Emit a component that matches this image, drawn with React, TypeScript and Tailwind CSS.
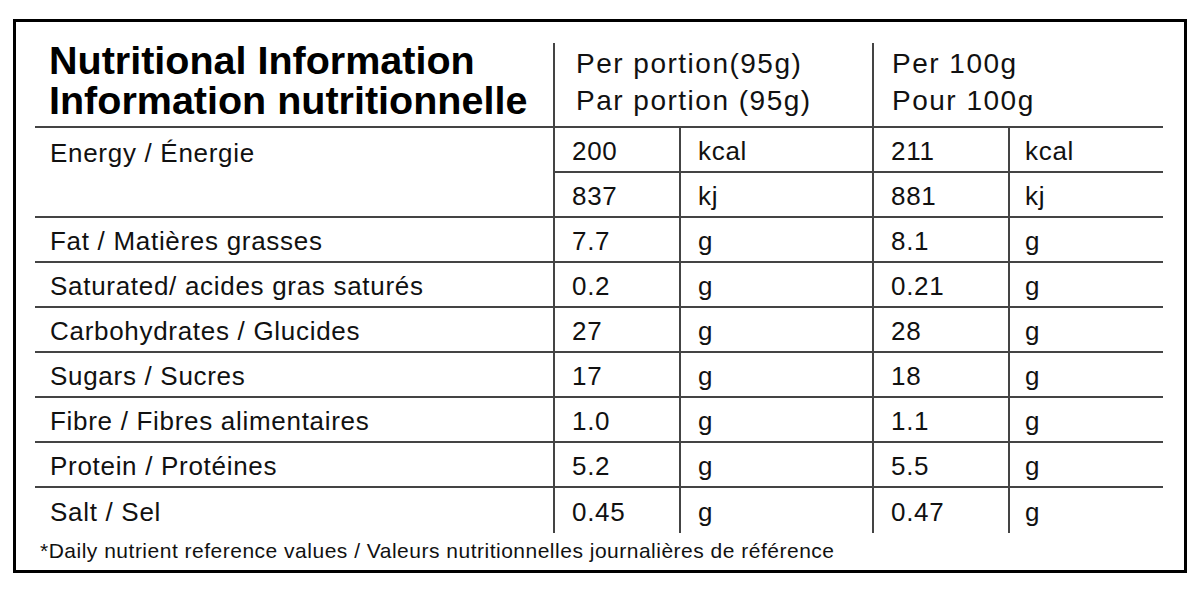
const rows = [
  { label: 'Fat / Matières grasses', a: '7.7', b: '8.1' },
  { label: 'Saturated/ acides gras saturés', a: '0.2', b: '0.21' },
  { label: 'Carbohydrates / Glucides', a: '27', b: '28' },
  { label: 'Sugars / Sucres', a: '17', b: '18' },
  { label: 'Fibre / Fibres alimentaires', a: '1.0', b: '1.1' },
  { label: 'Protein / Protéines', a: '5.2', b: '5.5' },
  { label: 'Salt / Sel', a: '0.45', b: '0.47' },
]

function ValueCells({ a, ua, b, ub }: { a: string; ua: string; b: string; ub: string }) {
  return (
    <>
      <div className="w-[126px] border-l-2 border-[#444] pl-[17px] pt-1 flex items-center">{a}</div>
      <div className="w-[193px] border-l-2 border-[#444] pl-[17px] pt-1 flex items-center">{ua}</div>
      <div className="w-[136px] border-l-2 border-[#444] pl-[17px] pt-1 flex items-center">{b}</div>
      <div className="w-[155px] border-l-2 border-[#444] pl-[15px] pt-1 flex items-center">{ub}</div>
    </>
  )
}

export default function App() {
  return (
    <div className="w-[1200px] h-[590px] bg-white pt-[19px] pl-[13px] font-['Liberation_Sans',Arial,sans-serif] text-[#111]">
      <div className="w-[1174px] h-[554px] border-[3px] border-black pt-[21px] pl-[19px]">
        <div className="w-[1128px]">
          {/* Header */}
          <div className="flex h-[85px] border-b-2 border-[#444]">
            <div className="w-[518px] pl-[14px] -mt-[3px] text-[39.5px] font-bold leading-[40px] text-black">
              <div>Nutritional Information</div>
              <div>Information nutritionnelle</div>
            </div>
            <div className="w-[319px] border-l-2 border-[#444] pl-[21px] pt-[2px] text-[28px] leading-[37px] tracking-[1.5px]">
              <div>Per portion(95g)</div>
              <div>Par portion (95g)</div>
            </div>
            <div className="w-[291px] border-l-2 border-[#444] pl-[18px] pt-[2px] text-[28px] leading-[37px] tracking-[1.5px]">
              <div>Per 100g</div>
              <div>Pour 100g</div>
            </div>
          </div>

          <div className="text-[26px] tracking-[0.7px]">
            {/* Energy */}
            <div className="flex border-b-2 border-[#444]">
              <div className="w-[518px] pl-[15px] pt-[6px]">Energy / Énergie</div>
              <div className="flex flex-col">
                <div className="flex h-[45px] border-b-2 border-[#444]">
                  <ValueCells a="200" ua="kcal" b="211" ub="kcal" />
                </div>
                <div className="flex h-[43px]">
                  <ValueCells a="837" ua="kj" b="881" ub="kj" />
                </div>
              </div>
            </div>

            {rows.map((r, i) => (
              <div
                key={r.label}
                className={`flex h-[45px] ${i < rows.length - 1 ? 'border-b-2 border-[#444]' : ''}`}
              >
                <div className="w-[518px] pl-[15px] pt-1 flex items-center">{r.label}</div>
                <ValueCells a={r.a} ua="g" b={r.b} ub="g" />
              </div>
            ))}
          </div>

          {/* Footnote */}
          <div className="mt-[6px] pl-[5px] text-[21px] leading-[24px] tracking-[0.5px]">
            *Daily nutrient reference values / Valeurs nutritionnelles journalières de référence
          </div>
        </div>
      </div>
    </div>
  )
}
